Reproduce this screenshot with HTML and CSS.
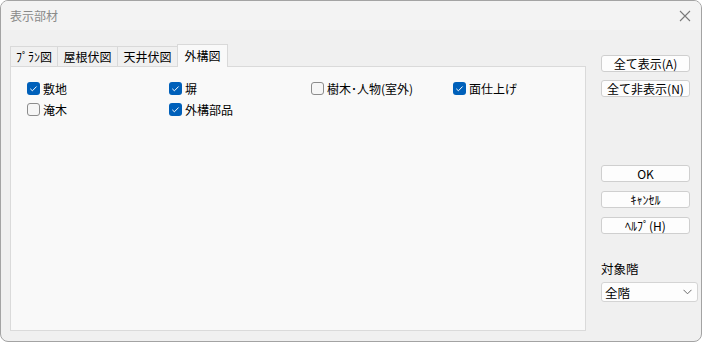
FILE: index.html
```html
<!DOCTYPE html>
<html lang="ja">
<head>
    <meta charset="UTF-8">
    <title>表示部材</title>
    <link rel="stylesheet" href="styles.css">
</head>
<body>
    <div class="window">
        <div class="titlebar">
            <span class="title">表示部材</span>
            <svg class="close" width="12" height="12" viewBox="0 0 12 12">
                <path d="M1 1 L11 11 M11 1 L1 11" stroke="#7a7a7a" stroke-width="1.1" fill="none"/>
            </svg>
        </div>

        <div class="content">
            <div class="left">
                <div class="tabs">
                    <div class="tab t1">ﾌﾟﾗﾝ図</div>
                    <div class="tab t2">屋根伏図</div>
                    <div class="tab t3">天井伏図</div>
                    <div class="tab t4 active">外構図</div>
                </div>
                <div class="panel">
                    <div class="checks">
                        <label class="check"><span class="box on"></span>敷地</label>
                        <label class="check"><span class="box on"></span>塀</label>
                        <label class="check"><span class="box"></span>樹木･人物(室外)</label>
                        <label class="check"><span class="box on"></span>面仕上げ</label>
                        <label class="check"><span class="box"></span>淹木</label>
                        <label class="check"><span class="box on"></span>外構部品</label>
                    </div>
                </div>
            </div>

            <div class="right">
                <button class="btn first">全て表示(A)</button>
                <button class="btn">全て非表示(N)</button>

                <button class="btn ok">OK</button>
                <button class="btn">ｷｬﾝｾﾙ</button>
                <button class="btn">ﾍﾙﾌﾟ(H)</button>

                <div class="floor-label">対象階</div>
                <div class="select">
                    <span>全階</span>
                    <svg width="9" height="6" viewBox="0 0 9 6">
                        <path d="M0.5 0.8 L4.5 4.8 L8.5 0.8" stroke="#6a6a6a" stroke-width="1" fill="none"/>
                    </svg>
                </div>
            </div>
        </div>
    </div>
</body>
</html>
```

FILE: styles.css
```css
body {
    margin: 0;
    background: #ffffff;
    font-family: "Noto Sans CJK JP", "Noto Sans", sans-serif;
    font-size: 12px;
    color: #000;
}
.window {
    width: 702px;
    height: 342px;
    box-sizing: border-box;
    border: 1px solid #a3a3a3;
    border-radius: 8px;
    background: #f0f0f0;
    overflow: hidden;
}
.titlebar {
    height: 29px;
    display: flex;
    align-items: center;
    justify-content: space-between;
    padding: 0 10px 0 9px;
    background: #f3f3f3;
}
.title {
    color: #8a8a8a;
    font-size: 12px;
}
.content {
    display: flex;
    padding: 14px 0 0 9px;
}
.left {
    width: 576px;
}
.tabs {
    display: flex;
    align-items: flex-end;
    height: 22px;
}
.tab {
    height: 20px;
    box-sizing: border-box;
    border: 1px solid #d9d9d9;
    border-bottom: none;
    margin-right: -1px;
    background: #f0f0f0;
    display: flex;
    align-items: center;
    justify-content: center;
    line-height: 1;
    font-size: 12px;
}
.t1 { width: 48px; }
.t2 { width: 61px; }
.t3 { width: 61px; }
.t4 { width: 51px; }
.tab.active {
    height: 23px;
    background: #f9f9f9;
    position: relative;
    z-index: 1;
    margin-bottom: -1px;
}
.panel {
    height: 265px;
    box-sizing: border-box;
    background: #f9f9f9;
    border: 1px solid #dadada;
    padding: 15px 0 0 16px;
}
.checks {
    display: grid;
    grid-template-columns: repeat(4, 142px);
    grid-auto-rows: 21px;
}
.check {
    display: flex;
    align-items: flex-start;
    gap: 3px;
    line-height: 13px;
    font-size: 12px;
}
.box {
    width: 13px;
    height: 13px;
    box-sizing: border-box;
    border: 1px solid #8c8c8c;
    border-radius: 3px;
    background: #f6f6f6;
    flex: none;
}
.box.on {
    border: none;
    background: #0060ba url("data:image/svg+xml,%3Csvg xmlns='http://www.w3.org/2000/svg' width='13' height='13'%3E%3Cpath d='M3.3 6.8 L5.4 8.8 L9.6 4.5' stroke='white' stroke-width='1' fill='none'/%3E%3C/svg%3E") no-repeat;
}
.right {
    display: flex;
    flex-direction: column;
    margin-left: 15px;
    padding-top: 11px;
}
.btn {
    width: 89px;
    height: 17px;
    box-sizing: border-box;
    border: 1px solid #cfcfcf;
    border-radius: 3px;
    background: #fdfdfd;
    font-family: "Noto Sans CJK JP", sans-serif;
    font-size: 12px;
    line-height: 1;
    padding: 0;
    margin-bottom: 9px;
    color: #000;
}
.btn.first {
    margin-bottom: 8px;
}
.btn.ok {
    margin-top: 59px;
}
.floor-label {
    margin-top: 19px;
    line-height: 13px;
    font-size: 12.5px;
}
.select {
    margin-top: 7px;
    width: 97px;
    height: 20px;
    box-sizing: border-box;
    border: 1px solid #d4d4d4;
    border-radius: 3px;
    background: #fdfdfd;
    display: flex;
    align-items: center;
    justify-content: space-between;
    padding: 0 5px 0 3px;
    font-size: 12.5px;
}
```
